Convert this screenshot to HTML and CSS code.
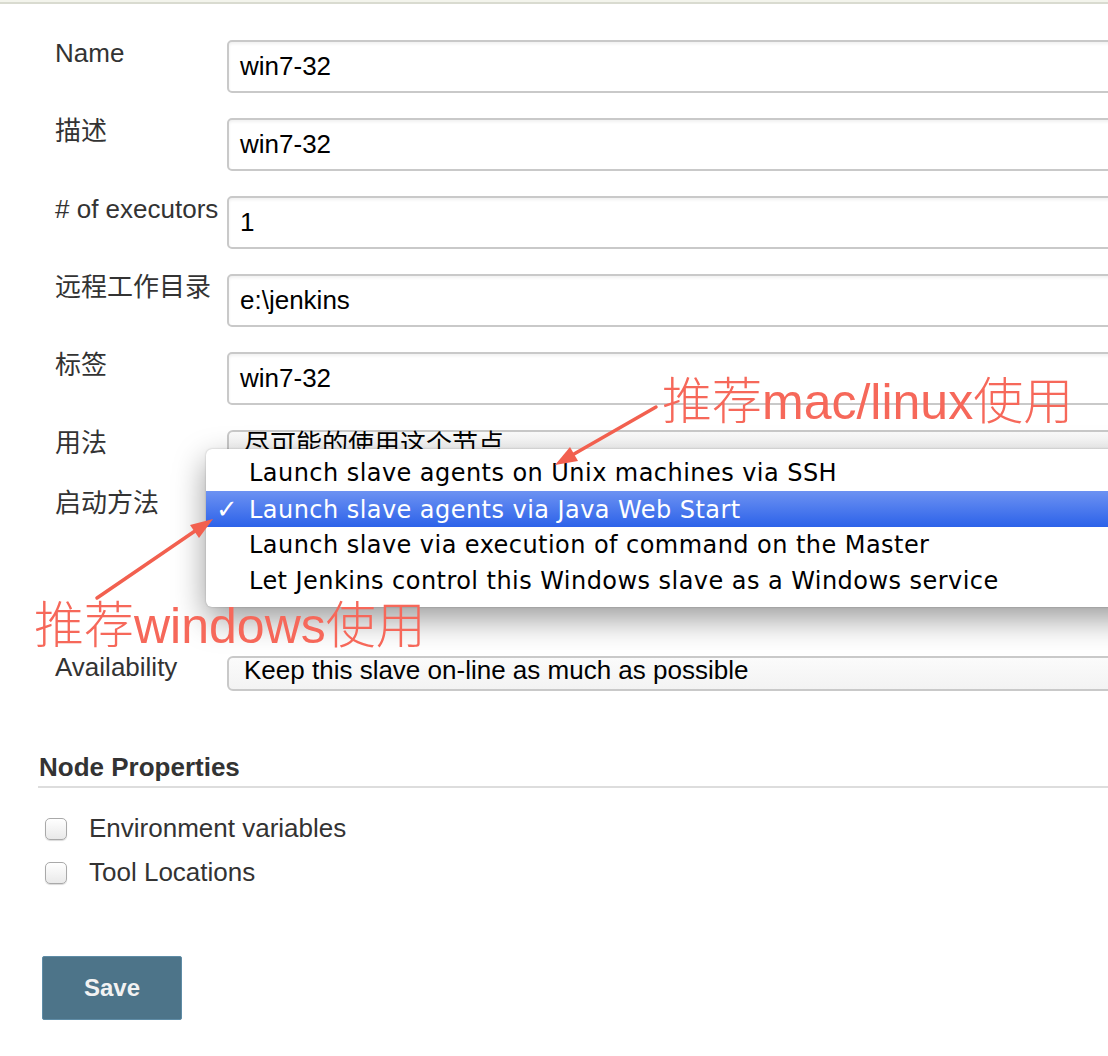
FILE: index.html
```html
<!DOCTYPE html>
<html lang="zh">
<head>
<meta charset="utf-8">
<title>Node configuration</title>
<link rel="stylesheet" href="styles.css">
</head>
<body>
<div class="top-rule"></div>
<main class="page">
  <section class="entries">
    <div class="entry">
      <div class="label">Name</div>
      <div class="field"><div class="input">win7-32</div></div>
    </div>
    <div class="entry">
      <div class="label">描述</div>
      <div class="field"><div class="input">win7-32</div></div>
    </div>
    <div class="entry">
      <div class="label"># of executors</div>
      <div class="field"><div class="input">1</div></div>
    </div>
    <div class="entry">
      <div class="label">远程工作目录</div>
      <div class="field"><div class="input">e:\jenkins</div></div>
    </div>
    <div class="entry">
      <div class="label">标签</div>
      <div class="field"><div class="input">win7-32</div></div>
    </div>
    <div class="entry">
      <div class="label">用法</div>
      <div class="field"><div class="select">尽可能的使用这个节点</div></div>
    </div>
    <div class="entry">
      <div class="label">启动方法</div>
      <div class="field">
        <div class="select"></div>
        <div class="launcher-config"></div>
      </div>
    </div>
    <div class="entry entry-availability">
      <div class="label">Availability</div>
      <div class="field"><div class="select">Keep this slave on-line as much as possible</div></div>
    </div>
  </section>

  <h2 class="section-title">Node Properties</h2>
  <ul class="props">
    <li class="prop"><span class="checkbox"></span><span>Environment variables</span></li>
    <li class="prop"><span class="checkbox"></span><span>Tool Locations</span></li>
  </ul>

  <button class="save" type="button">Save</button>
</main>

<ul class="dropdown">
  <li class="opt"><span class="check"></span>Launch slave agents on Unix machines via SSH</li>
  <li class="opt opt-selected"><span class="check">✓</span>Launch slave agents via Java Web Start</li>
  <li class="opt"><span class="check"></span>Launch slave via execution of command on the Master</li>
  <li class="opt"><span class="check"></span>Let Jenkins control this Windows slave as a Windows service</li>
</ul>

<div class="note note-mac">推荐mac/linux使用</div>
<div class="note note-win">推荐windows使用</div>

<svg class="arrows" width="1108" height="1056" viewBox="0 0 1108 1056">
  <line x1="656" y1="407" x2="574" y2="454" class="arrow-line"/>
  <polygon points="555,465 578,461 570,447" class="arrow-head"/>
  <line x1="97" y1="598" x2="195" y2="531" class="arrow-line"/>
  <polygon points="213,519 199,538 190,525" class="arrow-head"/>
</svg>
</body>
</html>
```

FILE: styles.css
```css
html, body {
  margin: 0;
  padding: 0;
  overflow: hidden;
  background: #fff;
}

body {
  position: relative;
  width: 1108px;
  height: 1056px;
  font-family: "Liberation Sans", "Noto Sans CJK SC", sans-serif;
  color: #333;
}

.top-rule {
  height: 2px;
  border-top: 2px solid #f3f4ec;
  background: #d9dbd0;
}

.page {
  width: 1200px;
  padding-left: 38px;
  box-sizing: border-box;
}

.entries {
  margin-top: 36px;
  display: flex;
  flex-direction: column;
  gap: 25px;
}

.entry {
  display: grid;
  grid-template-columns: 172px 1fr;
  padding-left: 17px;
  align-items: start;
}

.label {
  font-size: 26px;
  line-height: 30px;
  margin-top: -2.5px;
  color: #333;
  white-space: nowrap;
}

.entry-availability .label {
  margin-top: -4.5px;
}

.input {
  height: 53px;
  box-sizing: border-box;
  border: 2px solid #c9c9c9;
  border-radius: 5px;
  box-shadow: inset 0 2px 3px rgba(0, 0, 0, 0.06);
  padding: 0 11px;
  font-size: 26px;
  line-height: 49px;
  color: #000;
  background: #fff;
}

.select {
  height: 35px;
  box-sizing: border-box;
  border: 2px solid #c9c9c9;
  border-radius: 6px;
  padding: 0 15px;
  font-size: 26px;
  line-height: 24px;
  color: #000;
  background: linear-gradient(#fbfbfb, #f3f3f3);
  white-space: nowrap;
}

.launcher-config {
  height: 106px;
}

.section-title {
  margin: 61px 0 0;
  font-size: 26px;
  line-height: 30px;
  font-weight: bold;
  color: #333;
  padding: 0 0 4px 1px;
  border-bottom: 2px solid #ddd;
}

.props {
  list-style: none;
  margin: 25px 0 0;
  padding: 0;
  display: flex;
  flex-direction: column;
  gap: 14px;
}

.prop {
  display: flex;
  align-items: center;
  gap: 22px;
  padding-left: 7px;
  font-size: 26px;
  line-height: 30px;
  color: #333;
}

.checkbox {
  width: 22px;
  height: 22px;
  box-sizing: border-box;
  border: 1px solid #a9a9a9;
  border-radius: 5px;
  background: linear-gradient(#ffffff, #e9e9e9);
  box-shadow: 0 1px 1px rgba(0, 0, 0, 0.15);
  margin-top: 2px;
}

.save {
  display: block;
  margin: 69px 0 0 4px;
  width: 140px;
  height: 64px;
  border: 1px solid #5f8ca6;
  border-radius: 2px;
  background: #4d7489;
  color: #f2f2f2;
  font-family: "Liberation Sans", sans-serif;
  font-weight: bold;
  font-size: 24px;
  padding: 0;
}

/* open popup menu over the launch method select */
.dropdown {
  position: absolute;
  left: 206px;
  top: 449px;
  width: 1000px;
  margin: 0;
  padding: 6px 0 8px;
  list-style: none;
  background: #fff;
  border-radius: 6px;
  box-shadow: 0 12px 32px rgba(0, 0, 0, 0.4), 0 0 2px rgba(0, 0, 0, 0.25);
  font-family: "DejaVu Sans", sans-serif;
  font-size: 24px;
  letter-spacing: 0.45px;
  color: #000;
}

.opt {
  height: 36px;
  line-height: 36px;
  padding-left: 10px;
  white-space: nowrap;
}

.check {
  display: inline-block;
  width: 33px;
  font-weight: bold;
  font-size: 26px;
}

.opt-selected {
  background: linear-gradient(#6d92f2, #2c62e9);
  color: #fff;
}

/* red annotations */
.note {
  position: absolute;
  font-family: "Liberation Sans", "Noto Sans CJK SC", sans-serif;
  font-size: 50px;
  line-height: 50px;
  color: #f6685a;
  white-space: nowrap;
  font-weight: 300;
}

.note-mac {
  left: 662px;
  top: 377px;
}

.note-win {
  left: 34px;
  top: 601px;
}

.arrows {
  position: absolute;
  left: 0;
  top: 0;
  pointer-events: none;
}

.arrow-line {
  stroke: #f2604f;
  stroke-width: 3.5;
  stroke-linecap: round;
}

.arrow-head {
  fill: #f2604f;
}
```
